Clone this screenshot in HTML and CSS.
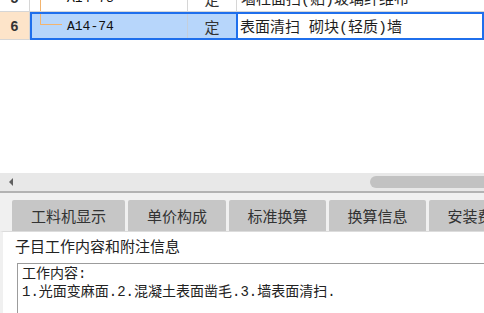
FILE: index.html
```html
<!DOCTYPE html>
<html lang="zh">
<head>
<meta charset="utf-8">
<link rel="stylesheet" href="styles.css">
</head>
<body>
<div class="app">
  <div class="grid">
    <div class="rows">
      <div class="row r5">
        <div class="c num">5</div>
        <div class="c name"><span class="tree full"></span><span class="code">A14-73</span></div>
        <div class="c type">定</div>
        <div class="c desc">墙柱面扫(贴)玻璃纤维布</div>
      </div>
      <div class="row r6">
        <div class="c num cur">6</div>
        <div class="sel">
          <div class="c name"><span class="tree end"></span><span class="code">A14-74</span></div>
          <div class="c type">定</div>
          <div class="c desc edit">表面清扫 砌块(轻质)墙</div>
        </div>
      </div>
    </div>
  </div>
  <div class="hscroll"><span class="arrow"></span><span class="thumb"></span></div>
  <div class="tabs">
    <div class="tab t1">工料机显示</div>
    <div class="tab t2">单价构成</div>
    <div class="tab t3">标准换算</div>
    <div class="tab t4">换算信息</div>
    <div class="tab t5">安装费用</div>
  </div>
  <div class="panel">
    <div class="label">子目工作内容和附注信息</div>
    <div class="box">工作内容:<br>1.光面变麻面.2.混凝土表面凿毛.3.墙表面清扫.</div>
  </div>
</div>
</body>
</html>
```

FILE: styles.css
```css
html, body {
  margin: 0;
  padding: 0;
}
body {
  width: 484px;
  height: 313px;
  overflow: hidden;
  background: #ffffff;
  font-family: "Noto Sans CJK SC", "Noto Sans", sans-serif;
  color: #222;
}
.app {
  display: flex;
  flex-direction: column;
  height: 313px;
  overflow: hidden;
}
.grid {
  height: 173px;
  overflow: hidden;
  background: #fff;
  flex: none;
}
.rows {
  margin-top: -15px;
}
.row {
  display: flex;
  height: 27px;
}
.c {
  display: flex;
  align-items: center;
  box-sizing: border-box;
  font-size: 15px;
  white-space: nowrap;
  overflow: hidden;
}
.r5 .c {
  border-right: 1px solid #d6d6d6;
  border-bottom: 1px solid #d6d6d6;
}
.num {
  width: 30px;
  justify-content: center;
  font-family: "Liberation Sans", sans-serif;
  font-weight: bold;
  font-size: 14px;
  color: #333;
}
.r5 .name { width: 158px; }
.r5 .type { width: 49px; justify-content: center; }
.r5 .desc { flex: 1; padding-left: 4px; border-right: none; }
.r5 .tree { margin-left: 10px; }

.desc {
  font-family: "Liberation Mono", "Noto Sans CJK SC", monospace;
  color: #1e1e1e;
}

.r6 { height: 28px; }
.num.cur {
  background: #fde4c9;
  border-right: 1px solid #d6d6d6;
  border-bottom: 1px solid #d6d6d6;
}
.sel {
  flex: 1;
  display: flex;
  box-sizing: border-box;
  height: 28px;
  border: 2px solid #1f6fec;
  background: #b7d6fb;
}
.sel .name {
  width: 156px;
  border-right: 1px solid #c4cfdc;
  align-items: stretch;
}
.sel .type {
  width: 48px;
  justify-content: center;
}
.sel .desc {
  flex: 1;
  background: #fff;
  border-left: 2px solid #1f6fec;
  padding-left: 2px;
}
.name {
  align-items: stretch;
}
.tree {
  flex: none;
  box-sizing: border-box;
  width: 22px;
  border-left: 1px solid #f3b46e;
}
.tree.full {
  align-self: stretch;
}
.tree.end {
  margin-left: 8px;
  height: 11px;
  align-self: flex-start;
  border-bottom: 1px solid #f3b46e;
}
.code {
  align-self: center;
  margin-left: 5px;
  font-family: "Liberation Mono", monospace;
  font-size: 13px;
  color: #111;
}
.type {
  color: #333;
}

.hscroll {
  flex: none;
  height: 18px;
  background: #e8e8e8;
  border-bottom: 2px solid #b2b2b2;
  display: flex;
  align-items: center;
}
.arrow {
  width: 0;
  height: 0;
  margin-left: 9px;
  border-top: 4px solid transparent;
  border-bottom: 4px solid transparent;
  border-right: 4px solid #606060;
}
.thumb {
  margin-left: auto;
  width: 130px;
  margin-right: -16px;
  height: 12px;
  border-radius: 6px;
  background: #c2c2c2;
}

.tabs {
  flex: none;
  display: flex;
  gap: 3px;
  padding: 7px 0 0 12px;
  background: #f0f0f0;
  overflow: hidden;
}
.tab {
  flex: none;
  height: 31px;
  box-sizing: border-box;
  background: #c6c6c6;
  border-radius: 2px 2px 0 0;
  display: flex;
  align-items: center;
  justify-content: center;
  font-size: 15px;
  color: #333;
  white-space: nowrap;
}
.t1 { width: 113px; }
.t2 { width: 98px; }
.t3 { width: 97px; }
.t4 { width: 97px; }
.t5 { width: 97px; }

.panel {
  flex: 1;
  min-height: 0;
  display: flex;
  flex-direction: column;
  background: #fff;
  border-left: 3px solid #f0f0f0;
  border-top: 1px solid #dcdcdc;
}
.label {
  flex: none;
  margin: 3px 0 0 12px;
  height: 22px;
  line-height: 22px;
  font-size: 15px;
  color: #222;
}
.box {
  flex: 1;
  min-height: 0;
  margin: 6px 0 0 14px;
  border: 1px solid #9c9c9c;
  border-right: none;
  border-bottom: none;
  padding: 1px 4px 0;
  font-family: "Liberation Mono", "Noto Sans CJK SC", monospace;
  font-size: 14px;
  line-height: 18px;
  color: #222;
  overflow: hidden;
}
```
